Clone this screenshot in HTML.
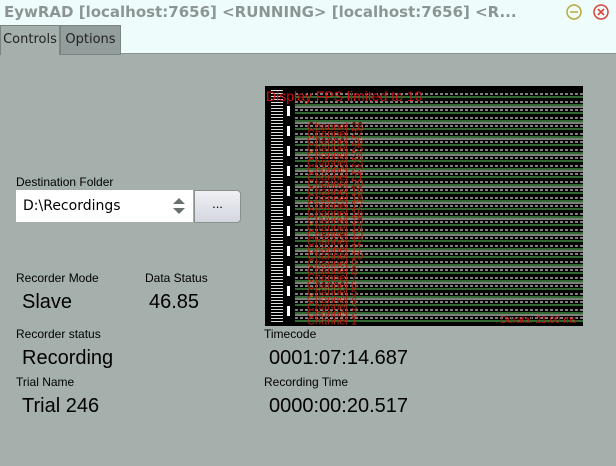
<!DOCTYPE html>
<html><head><style>
body{margin:0;width:616px;height:466px;background:#a5b0ad;font-family:"Liberation Sans","DejaVu Sans",sans-serif;position:relative;overflow:hidden}
.t{position:absolute;white-space:nowrap;color:#000}
#title{position:absolute;left:0;top:0;width:616px;height:24px;background:#eefcfc}
#tabs{position:absolute;left:0;top:24px;width:616px;height:29px;background:#eefcfc;border-bottom:1px solid #8a9593}
.tab{position:absolute;top:25px;height:28px;border:1px solid #7a8583;font-size:13px;line-height:28px;text-align:center;font-family:"DejaVu Sans",sans-serif;color:#222}
.big{font-size:20px}
.sm{font-size:12px}
</style></head><body>
<div id="title"></div>
<div class="t" style="left:4px;top:3px;font-size:15px;font-weight:bold;color:#8c9494;font-family:'DejaVu Sans',sans-serif">EywRAD [localhost:7656] &lt;RUNNING&gt; [localhost:7656] &lt;R...</div>
<svg style="position:absolute;left:565px;top:3px" width="50" height="18"><circle cx="9" cy="9" r="7" fill="none" stroke="#b8a93a" stroke-width="1.5"/><line x1="5" y1="9" x2="13" y2="9" stroke="#b8a93a" stroke-width="1.5"/><circle cx="36" cy="9" r="7" fill="none" stroke="#d9443c" stroke-width="1.5"/><path d="M33 6l6 6M39 6l-6 6" stroke="#d9443c" stroke-width="1.6"/></svg>
<div id="tabs"></div>
<div class="tab" style="left:0;width:58px;background:#a5b0ad;border-bottom:none;height:29px">Controls</div>
<div class="tab" style="left:60px;width:59px;background:#939d9b">Options</div>

<div class="t sm" style="left:16px;top:175px">Destination Folder</div>
<div style="position:absolute;left:16px;top:190px;width:177px;height:32px;background:#fff"></div>
<div class="t" style="left:23px;top:198px;font-size:14px;font-family:'DejaVu Sans',sans-serif">D:\Recordings</div>
<svg style="position:absolute;left:172px;top:197px" width="14" height="18"><path d="M1 7L7 1L13 7Z M1 11L7 17L13 11Z" fill="#6a7070"/></svg>
<div style="position:absolute;left:194px;top:190px;width:45px;height:31px;background:linear-gradient(#eef0f4,#d4d7df);border:1px solid #8a9090;border-radius:0 4px 4px 0;text-align:center;font-size:13px;line-height:26px">...</div>

<div class="t sm" style="left:16px;top:271px">Recorder Mode</div>
<div class="t sm" style="left:145px;top:271px">Data Status</div>
<div class="t big" style="left:22px;top:291px">Slave</div>
<div class="t big" style="left:149px;top:291px">46.85</div>
<div class="t sm" style="left:16px;top:327px">Recorder status</div>
<div class="t big" style="left:22px;top:347px">Recording</div>
<div class="t sm" style="left:16px;top:375px">Trial Name</div>
<div class="t big" style="left:22px;top:395px">Trial 246</div>
<div class="t sm" style="left:264px;top:327px">Timecode</div>
<div class="t big" style="left:269px;top:347px">0001:07:14.687</div>
<div class="t sm" style="left:264px;top:375px">Recording Time</div>
<div class="t big" style="left:269px;top:395px">0000:00:20.517</div>

<svg style="position:absolute;left:265px;top:86px" width="318" height="240" id="ch">
<rect width="318" height="240" fill="#000"/>
<g id="lines"></g>
<text x="1" y="15" fill="#d01010" font-size="14" font-family="Liberation Sans">Display FPS limited to 10</text>
<text x="235" y="237" fill="#c01010" font-size="10" font-family="Liberation Sans">Durata: 21.00 ms</text>
</svg>
<script>
var g=document.getElementById('lines'),s='';
for(var y=8;y<236;y+=8){
 s+='<line x1="30" y1="'+y+'" x2="318" y2="'+y+'" stroke="#fff" stroke-dasharray="3 2" stroke-width="1"/>';
 s+='<line x1="30" y1="'+(y+3)+'" x2="318" y2="'+(y+3)+'" stroke="#5fd25f" stroke-width="1"/>';
 if((y/8)%2==0)s+='<line x1="30" y1="'+(y+5)+'" x2="318" y2="'+(y+5)+'" stroke="#fff" stroke-width="1"/>';
}
for(var y=4;y<236;y+=3){s+='<rect x="6" y="'+y+'" width="12" height="1" fill="#ddd"/>';}
for(var y=20;y<236;y+=20){s+='<rect x="22" y="'+y+'" width="3" height="10" fill="#fff"/>';}
for(var i=28;i>=1;i--){var yy=44+(28-i)*7.2;s+='<text x="42" y="'+yy+'" fill="#b02010" font-size="11" font-family="Liberation Sans">Channel '+i+'</text>';}
g.innerHTML=s;
</script>
</body></html>
